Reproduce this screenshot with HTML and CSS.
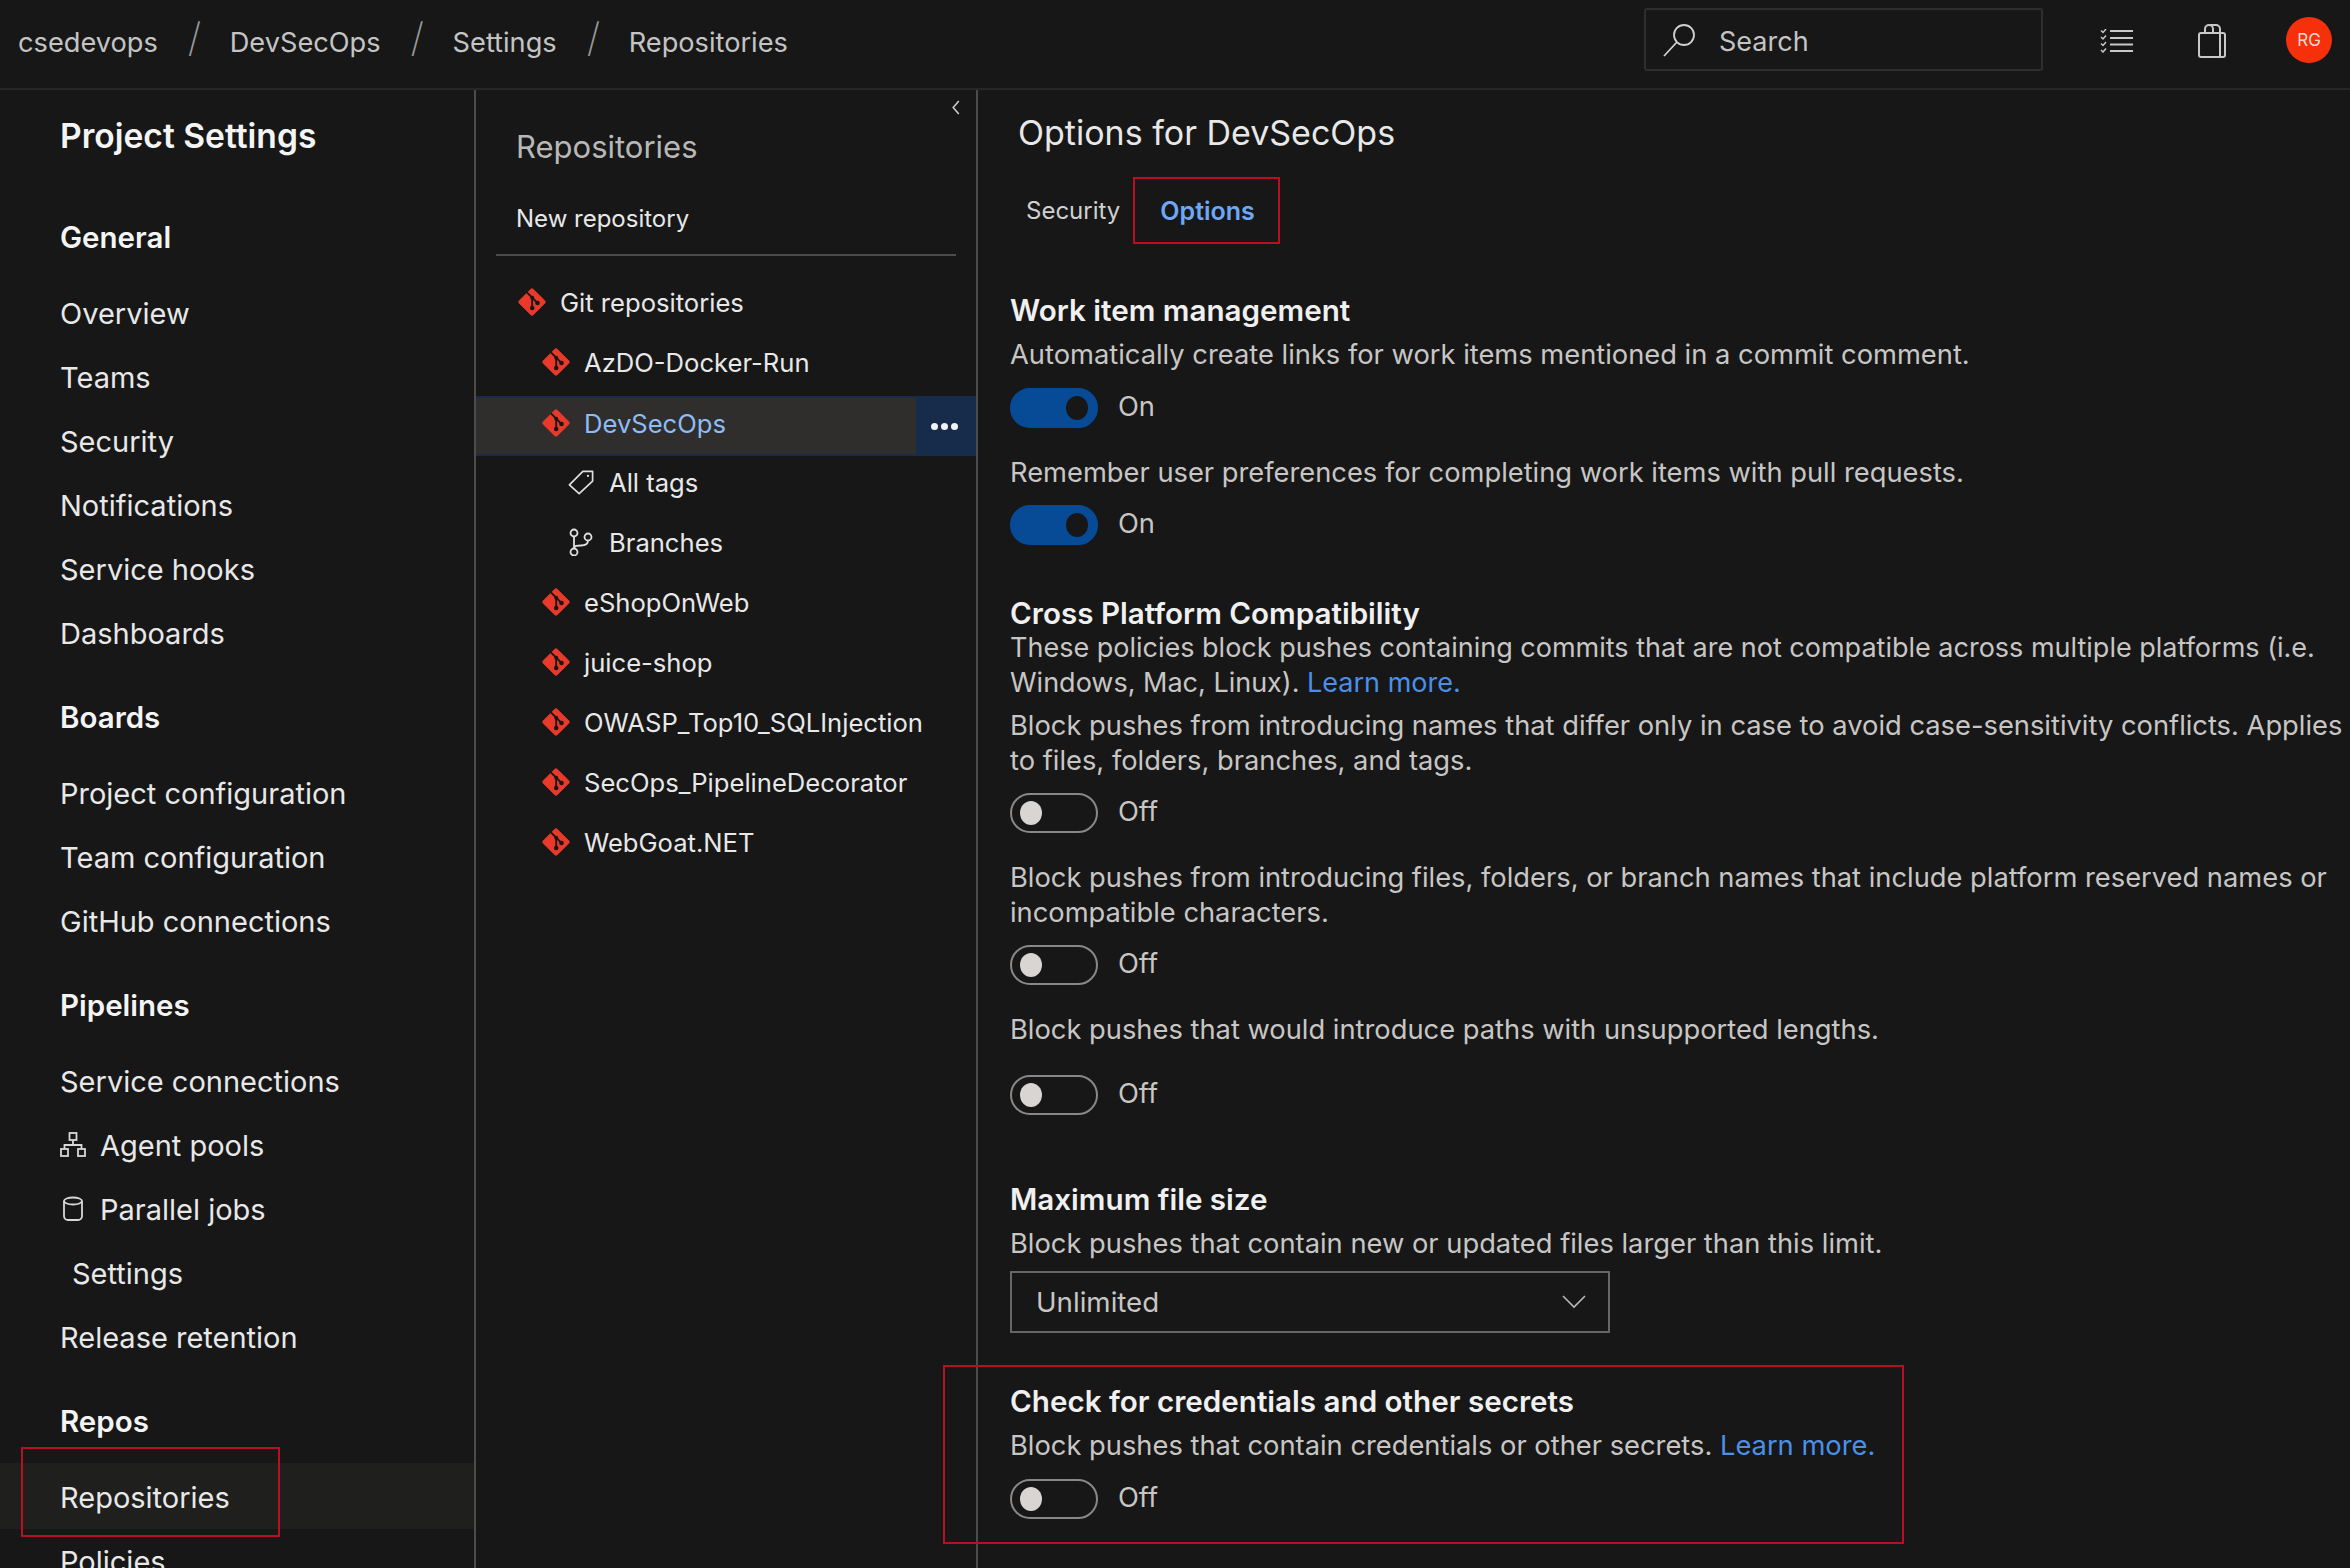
FILE: index.html
```html
<!DOCTYPE html>
<html>
<head>
  <title>Repositories - Settings</title>
  <link rel="stylesheet" href="styles.css">
</head>
<body>
  <svg class="defs" width="0" height="0">
    <symbol id="git" viewBox="0 0 28 28">
      <path d="M12.6 1 1 12.6a2 2 0 0 0 0 2.8L12.6 27a2 2 0 0 0 2.8 0L27 15.400a2 2 0 0 0 0-2.800L15.400 1a2 2 0 0 0-2.800 0Z" fill="#e8392a"/>
      <path d="M9 4.500 14.200 9.700V20M14.200 9.700 19.500 15" fill="none" stroke="#171717" stroke-width="1.800"/>
      <circle cx="14.200" cy="9.700" r="2" fill="#171717"/>
      <circle cx="14.200" cy="20" r="2.300" fill="#171717"/>
      <circle cx="19.500" cy="15" r="2.300" fill="#171717"/>
    </symbol>
  </svg>

  <header class="topbar">
    <nav class="crumbs">
      <span class="crumb">csedevops</span><span class="slash">/</span>
      <span class="crumb">DevSecOps</span><span class="slash">/</span>
      <span class="crumb">Settings</span><span class="slash">/</span>
      <span class="crumb">Repositories</span>
    </nav>
    <div class="search">
      <svg class="search-icon" width="34" height="34" viewBox="0 0 34 34" fill="none" stroke="#d0d0d0" stroke-width="1.800"><circle cx="22" cy="12" r="10"/><path d="M15 19 2 33"/></svg>
      <span class="search-text">Search</span>
    </div>
    <svg class="top-icon list-icon" width="34" height="24" viewBox="0 0 34 24" fill="none" stroke="#c8c8c8" stroke-width="2">
      <path d="M10 2h23M10 9h23M10 15.500h23M10 22h23"/>
      <path d="M1 1.500l2 2 3-3.500M1 8l2 2 3-3.500M1 14.500l2 2 3-3.500M1 21l2 2 3-3.500" stroke-width="1.500"/>
    </svg>
    <svg class="top-icon bag-icon" width="28" height="34" viewBox="0 0 28 34" fill="none" stroke="#c8c8c8" stroke-width="2">
      <rect x="1" y="9" width="26" height="24" rx="2"/><path d="M22 9V33M7 9V5a4 4 0 0 1 8 0v4M12 1h6a4 4 0 0 1 4 4v4"/>
    </svg>
    <div class="avatar">RG</div>
  </header>

  <main class="layout">
    <aside class="sidebar">
      <h1 class="side-title">Project Settings</h1>

      <h2 class="side-head">General</h2>
      <a class="side-item">Overview</a>
      <a class="side-item">Teams</a>
      <a class="side-item">Security</a>
      <a class="side-item">Notifications</a>
      <a class="side-item">Service hooks</a>
      <a class="side-item">Dashboards</a>

      <h2 class="side-head">Boards</h2>
      <a class="side-item">Project configuration</a>
      <a class="side-item">Team configuration</a>
      <a class="side-item">GitHub connections</a>

      <h2 class="side-head">Pipelines</h2>
      <a class="side-item">Service connections</a>
      <a class="side-item">
        <svg class="side-icon" width="26" height="26" viewBox="0 0 26 26" fill="none" stroke="#d8d8d8" stroke-width="1.800"><rect x="9.500" y="1" width="7" height="7"/><rect x="1" y="17" width="7" height="7"/><rect x="18" y="17" width="7" height="7"/><path d="M13 8v5M4.500 17v-4h17v4"/></svg>
        Agent pools
      </a>
      <a class="side-item">
        <svg class="side-icon" width="26" height="26" viewBox="0 0 26 26" fill="none" stroke="#d8d8d8" stroke-width="1.800"><ellipse cx="13" cy="5" rx="9" ry="3.500"/><path d="M4 5v15a4 4 0 0 0 4 4h10a4 4 0 0 0 4-4V5"/></svg>
        Parallel jobs
      </a>
      <a class="side-item side-sub">Settings</a>
      <a class="side-item">Release retention</a>

      <h2 class="side-head">Repos</h2>
      <a class="side-item side-active">Repositories</a>
      <a class="side-item">Policies</a>
    </aside>

    <section class="repos">
      <svg class="collapse" width="10" height="15" viewBox="0 0 10 16" fill="none" stroke="#d0d0d0" stroke-width="1.600"><path d="M8 1 2 8l6 7"/></svg>
      <h2 class="repos-title">Repositories</h2>
      <a class="new-repo">New repository</a>
      <div class="divider"></div>
      <ul class="tree">
        <li class="tree-row lvl-1"><svg class="git-icon"><use href="#git"/></svg>Git repositories</li>
        <li class="tree-row lvl-2"><svg class="git-icon"><use href="#git"/></svg>AzDO-Docker-Run</li>
        <li class="tree-row lvl-2 selected">
          <svg class="git-icon"><use href="#git"/></svg>DevSecOps
          <span class="more"><i></i><i></i><i></i></span>
        </li>
        <li class="tree-row lvl-3">
          <svg class="sub-icon" width="26" height="26" viewBox="0 0 28 28" fill="none" stroke="#e0e0e0" stroke-width="1.800"><path d="M1.500 17 16 2.500h10.500V13L12 26.500Z" stroke-linejoin="round"/><circle cx="21.500" cy="7.500" r="1.200" fill="#e0e0e0" stroke="none"/></svg>
          All tags
        </li>
        <li class="tree-row lvl-3">
          <svg class="sub-icon" width="26" height="28" viewBox="0 0 26 28" fill="none" stroke="#e0e0e0" stroke-width="1.800"><circle cx="6" cy="5" r="3.500"/><circle cx="6" cy="24" r="3.500"/><circle cx="20" cy="9" r="3.500"/><path d="M6 8.500v12M20 12.500c0 4-3 5-7 5-4 0-7 0-7 3"/></svg>
          Branches
        </li>
        <li class="tree-row lvl-2"><svg class="git-icon"><use href="#git"/></svg>eShopOnWeb</li>
        <li class="tree-row lvl-2"><svg class="git-icon"><use href="#git"/></svg>juice-shop</li>
        <li class="tree-row lvl-2"><svg class="git-icon"><use href="#git"/></svg>OWASP_Top10_SQLInjection</li>
        <li class="tree-row lvl-2"><svg class="git-icon"><use href="#git"/></svg>SecOps_PipelineDecorator</li>
        <li class="tree-row lvl-2"><svg class="git-icon"><use href="#git"/></svg>WebGoat.NET</li>
      </ul>
    </section>

    <section class="content">
      <h1 class="page-title">Options for DevSecOps</h1>
      <div class="tabs">
        <a class="tab">Security</a>
        <a class="tab tab-on">Options</a>
      </div>

      <h3 class="opt-head">Work item management</h3>
      <p class="desc">Automatically create links for work items mentioned in a commit comment.</p>
      <div class="switch-row"><span class="switch on"></span>On</div>
      <p class="desc next">Remember user preferences for completing work items with pull requests.</p>
      <div class="switch-row"><span class="switch on"></span>On</div>

      <h3 class="opt-head cross">Cross Platform Compatibility</h3>
      <p class="desc tight">These policies block pushes containing commits that are not compatible across multiple platforms (i.e.<br>Windows, Mac, Linux). <a class="link">Learn more.</a></p>
      <p class="desc para">Block pushes from introducing names that differ only in case to avoid case-sensitivity conflicts. Applies<br>to files, folders, branches, and tags.</p>
      <div class="switch-row"><span class="switch"></span>Off</div>
      <p class="desc next">Block pushes from introducing files, folders, or branch names that include platform reserved names or<br>incompatible characters.</p>
      <div class="switch-row"><span class="switch"></span>Off</div>
      <p class="desc next">Block pushes that would introduce paths with unsupported lengths.</p>
      <div class="switch-row wide"><span class="switch"></span>Off</div>

      <h3 class="opt-head size">Maximum file size</h3>
      <p class="desc">Block pushes that contain new or updated files larger than this limit.</p>
      <div class="select">
        <span>Unlimited</span>
        <svg width="24" height="14" viewBox="0 0 24 14" fill="none" stroke="#b8b8b8" stroke-width="1.600"><path d="M1 1l11 11L23 1"/></svg>
      </div>

      <h3 class="opt-head cross">Check for credentials and other secrets</h3>
      <p class="desc">Block pushes that contain credentials or other secrets. <a class="link">Learn more.</a></p>
      <div class="switch-row"><span class="switch"></span>Off</div>
    </section>
  </main>

  <!-- red review marks drawn over the screenshot -->
  <div class="mark mark-nav"></div>
  <div class="mark mark-secrets"></div>
</body>
</html>
```

FILE: styles.css
```css
html, body {
  margin: 0;
  height: 1568px;
  overflow: hidden;
}

body {
  position: relative;
  background: #171717;
  color: #e4e4e4;
  font-family: Inter, "Noto Sans", sans-serif;
}

.defs {
  position: absolute;
}

h1, h2, h3, p, ul {
  margin: 0;
  padding: 0;
}

/* top bar */
.topbar {
  display: flex;
  align-items: center;
  height: 88px;
  border-bottom: 2px solid #262626;
}

.crumbs {
  display: flex;
  align-items: center;
  flex: 1;
  padding-left: 18px;
  padding-bottom: 4px;
  font-size: 27.200px;
  color: #c4c4c4;
}

.slash {
  width: 12px;
  margin: 0 30px 10px;
  font-size: 40px;
  font-weight: 200;
  text-align: center;
  color: #9a9a9a;
}

.search {
  display: flex;
  align-items: center;
  box-sizing: border-box;
  width: 399px;
  height: 63px;
  margin-bottom: 9px;
  border: 2px solid #2e2e2e;
  border-radius: 3px;
  font-size: 27px;
  color: #c4c4c4;
}

.search-text {
  padding-top: 3px;
}

.search-icon {
  margin: 0 23px 0 16px;
}

.top-icon {
  margin-bottom: 6px;
}

.list-icon {
  margin-left: 57px;
}

.bag-icon {
  margin-left: 64px;
}

.avatar {
  display: flex;
  align-items: center;
  justify-content: center;
  width: 46px;
  height: 46px;
  margin: 0 18px 8px 60px;
  border-radius: 50%;
  background: #f5300a;
  color: #ffd9d0;
  font-size: 17px;
}

/* columns */
.layout {
  display: flex;
  height: 1478px;
  overflow: hidden;
}

.sidebar {
  flex: none;
  width: 474px;
  padding-top: 22px;
  border-right: 2px solid #4c4c4c;
}

.side-title {
  padding-left: 60px;
  font-size: 33.600px;
  font-weight: 600;
  line-height: 48px;
  color: #f4f4f4;
}

.side-head {
  height: 64px;
  margin: 20px 0 12px;
  padding-left: 60px;
  font-size: 29.500px;
  font-weight: 600;
  line-height: 64px;
  color: #f4f4f4;
}

.side-title + .side-head {
  margin-top: 45px;
}

.side-item {
  display: flex;
  align-items: center;
  height: 64px;
  padding-left: 60px;
  font-size: 29px;
  color: #e8e8e8;
}

.side-sub {
  padding-left: 72px;
}

.side-active {
  margin-top: -2px;
  padding-top: 2px;
  background: #1f1f1e;
}

.side-icon {
  margin-right: 14px;
}

/* repository tree */
.repos {
  position: relative;
  flex: none;
  width: 500px;
  padding-top: 35px;
  border-right: 2px solid #4c4c4c;
}

.collapse {
  position: absolute;
  top: 10px;
  right: 15px;
}

.repos-title {
  padding-left: 40px;
  font-size: 31px;
  font-weight: 400;
  line-height: 44px;
  color: #b8b8b8;
}

.new-repo {
  display: block;
  margin-top: 30px;
  padding-left: 40px;
  font-size: 24px;
  line-height: 40px;
  color: #e8e8e8;
}

.divider {
  height: 2px;
  margin: 15px 20px 20px;
  background: #4c4c4c;
}

.tree {
  list-style: none;
}

.tree-row {
  position: relative;
  display: flex;
  align-items: center;
  box-sizing: border-box;
  height: 60px;
  padding-bottom: 8px;
  font-size: 25.600px;
  color: #e8e8e8;
}

.lvl-1 { padding-left: 42px; }
.lvl-2 { padding-left: 66px; }
.lvl-3 { padding-left: 92px; }

.git-icon {
  flex: none;
  width: 28px;
  height: 28px;
  margin-right: 14px;
}

.sub-icon {
  flex: none;
  margin-right: 15px;
}

.selected {
  border-top: 2px solid #172b4a;
  border-bottom: 2px solid #172b4a;
  padding-bottom: 6px;
  background: #2f2e2d;
  color: #8fbcf5;
}

.more {
  position: absolute;
  top: -2px;
  right: 0;
  bottom: -2px;
  display: flex;
  align-items: center;
  justify-content: center;
  gap: 3px;
  width: 60px;
  padding-right: 4px;
  box-sizing: border-box;
  background: #172b4a;
}

.more i {
  width: 7px;
  height: 7px;
  border-radius: 50%;
  background: #f2f2f2;
}

/* options */
.content {
  flex: 1;
  padding: 21px 0 0 32px;
}

.page-title {
  margin-left: 8px;
  font-size: 34px;
  font-weight: 400;
  line-height: 44px;
  color: #e8e8e8;
}

.tabs {
  display: flex;
  align-items: center;
  height: 67px;
  margin: 22px 0 46px 16px;
  font-size: 24px;
}

.tab {
  padding: 0 14px 0 0;
  color: #d0d0d0;
}

.tab-on {
  display: flex;
  align-items: center;
  box-sizing: border-box;
  height: 67px;
  margin-left: -1px;
  padding: 0 23px 0 25px;
  border: 2px solid #b80f22;
  color: #6ea8f5;
  font-size: 25px;
  font-weight: 600;
}

.opt-head {
  font-size: 29.600px;
  font-weight: 600;
  line-height: 40px;
  color: #f0f0f0;
}

.opt-head.cross { margin-top: 48px; }
.opt-head.size { margin-top: 64px; }

.desc {
  margin-top: 8px;
  font-size: 27.300px;
  line-height: 34.500px;
  color: #c8c6c4;
  white-space: nowrap;
}

.desc.next { margin-top: 28px; }
.desc.tight { margin-top: -2px; font-size: 27px; }
.desc.para { margin-top: 9px; }

.link {
  color: #4a90e8;
}

.switch-row {
  display: flex;
  align-items: flex-start;
  height: 40px;
  margin-top: 15px;
  font-size: 27.300px;
  line-height: 38px;
  color: #c8c6c4;
}

.switch-row.wide { margin-top: 27px; }

.switch {
  position: relative;
  flex: none;
  box-sizing: border-box;
  width: 88px;
  height: 40px;
  margin-right: 20px;
  border: 2px solid #8a8886;
  border-radius: 20px;
}

.switch::after {
  content: "";
  position: absolute;
  top: 6px;
  left: 8px;
  width: 22px;
  height: 24px;
  border-radius: 50%;
  background: #d8d5d2;
}

.switch.on {
  border-color: #074b97;
  background: #074b97;
}

.switch.on::after {
  left: 54px;
  background: #171717;
}

.select {
  display: flex;
  align-items: center;
  justify-content: space-between;
  box-sizing: border-box;
  width: 600px;
  height: 62px;
  margin-top: 10px;
  padding: 0 22px 0 24px;
  border: 2px solid #666664;
  font-size: 27.700px;
  color: #c8c6c4;
}

/* annotations */
.mark {
  position: absolute;
  box-sizing: border-box;
  border: 2px solid #b80f22;
  pointer-events: none;
}

.mark-nav {
  left: 21px;
  top: 1447px;
  width: 259px;
  height: 90px;
}

.mark-secrets {
  left: 943px;
  top: 1365px;
  width: 961px;
  height: 179px;
}
```
